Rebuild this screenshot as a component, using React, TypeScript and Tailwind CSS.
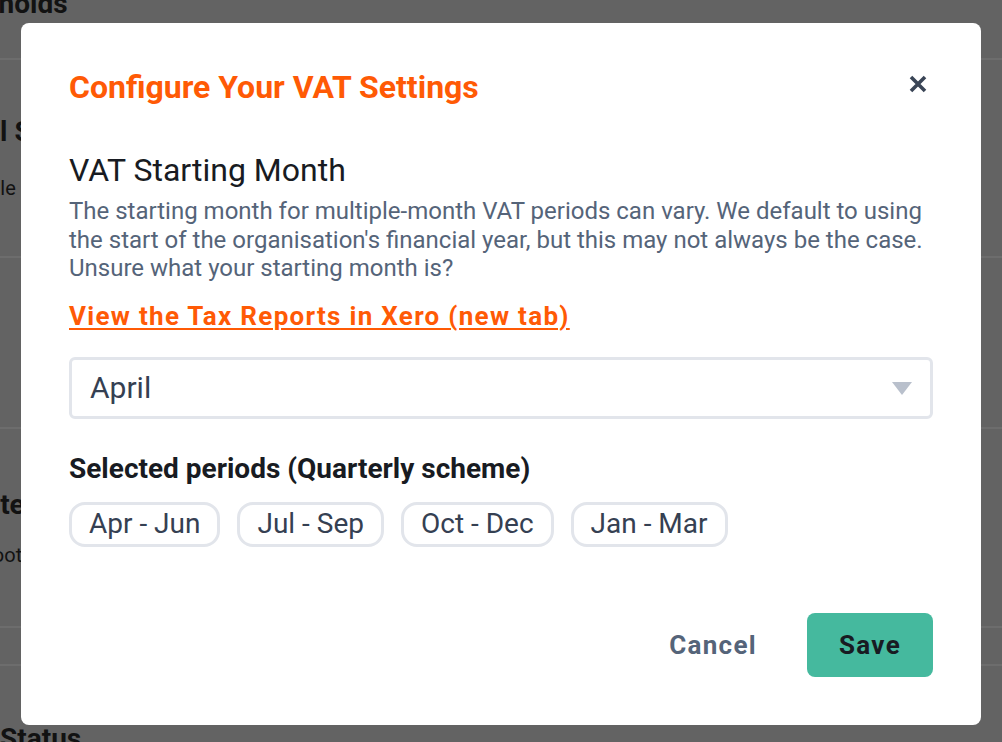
const periods = ['Apr - Jun', 'Jul - Sep', 'Oct - Dec', 'Jan - Mar'];

function BackgroundPage() {
  // the settings page behind the dialog, dimmed by the overlay
  return (
    <div className="flex flex-col text-[#121212]">
      <div className="h-[60px] border-b-2 border-[#6d6d6d]">
        <p className="-mt-[12px] -ml-[74px] text-[28px] leading-[32px] font-bold">Thresholds</p>
      </div>
      <div className="h-[198px] border-b-2 border-[#6d6d6d] pt-[56px]">
        <p className="-ml-[73px] text-[28px] leading-[32px] font-bold">Global Settings</p>
        <p className="mt-[26px] -ml-[66px] text-[20px] leading-[28px]">Schedule reminders for each period</p>
      </div>
      <div className="h-[171px] border-b-2 border-[#6d6d6d]" />
      <div className="h-[199px] border-b-2 border-[#6d6d6d] pt-[60px]">
        <p className="-ml-[30px] text-[28px] leading-[32px] font-bold">Late filing</p>
        <p className="mt-[20px] -ml-[18px] text-[20px] leading-[28px]">Footer text settings</p>
      </div>
      <div className="h-[38px] border-b-2 border-[#6d6d6d]" />
      <div className="pt-[57px]">
        <p className="text-[28px] leading-[32px] font-bold">Status</p>
      </div>
    </div>
  );
}

export default function App() {
  return (
    <div className="relative w-[1002px] h-[742px] overflow-hidden bg-[#636363] font-['Roboto',sans-serif]">
      <BackgroundPage />

      {/* Dialog */}
      <div className="absolute left-[21px] top-[23px] w-[960px] rounded-lg bg-white p-12">
        <div className="flex items-center justify-between">
          <h1 className="text-[32px] leading-[32px] font-bold text-[#ff5a05]">Configure Your VAT Settings</h1>
          <button className="-mt-[6px] mr-[6px] text-[#3a4556]">
            <svg width="18" height="18" viewBox="0 0 18 18">
              <path d="M2 2 L16 16 M16 2 L2 16" stroke="currentColor" strokeWidth="3.6" fill="none" />
            </svg>
          </button>
        </div>

        <h2 className="mt-[47px] text-[32px] leading-[40px] text-[#181b22]">VAT Starting Month</h2>
        <p className="mt-[7px] text-[24px] leading-[28.5px] text-[#556479]">
          The starting month for multiple-month VAT periods can vary. We default to using the start of the
          organisation's financial year, but this may not always be the case. Unsure what your starting month is?
        </p>

        <a
          href="#"
          className="mt-[17px] inline-block text-[26px] leading-[32px] font-bold tracking-wider text-[#ff5a05] underline underline-offset-[3px] decoration-2"
        >
          View the Tax Reports in Xero (new tab)
        </a>

        <div className="mt-[25px] flex h-[62px] items-center justify-between rounded-md border-[3px] border-[#e2e5eb] pl-[18px] pr-[18px]">
          <span className="text-[30px] leading-[36px] text-[#354052]">April</span>
          <svg width="20" height="14" viewBox="0 0 20 14" className="mt-[2px]">
            <polygon points="0,0 20,0 10,13" fill="#b9c0cc" />
          </svg>
        </div>

        <h3 className="mt-[34px] text-[28px] leading-[32px] font-bold text-[#181b22]">
          Selected periods (Quarterly scheme)
        </h3>
        <div className="mt-[17px] flex gap-[17px]">
          {periods.map(p => (
            <span
              key={p}
              className="flex h-[45px] items-center rounded-2xl border-[3px] border-[#e2e5eb] px-[17px] text-[28px] leading-[32px] text-[#354052]"
            >
              {p}
            </span>
          ))}
        </div>

        <div className="mt-[66px] flex items-center justify-end gap-[50px]">
          <button className="text-[26px] leading-[32px] font-bold tracking-wider text-[#556479]">Cancel</button>
          <button className="h-[64px] w-[126px] rounded-lg bg-[#45b99e] text-[26px] leading-[32px] font-bold tracking-wider text-[#181b22]">
            Save
          </button>
        </div>
      </div>
    </div>
  );
}
